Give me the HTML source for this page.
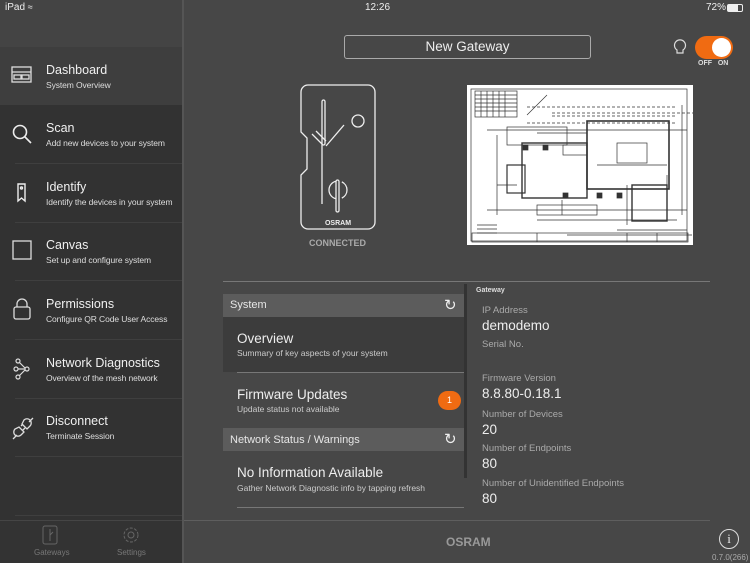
<!DOCTYPE html>
<html><head><meta charset="utf-8"><style>
*{margin:0;padding:0;box-sizing:border-box}
body{width:750px;height:563px;overflow:hidden;background:#474747;font-family:"Liberation Sans",sans-serif;color:#eee;position:relative}
.abs{position:absolute;white-space:nowrap}
#side{left:0;top:0;width:182px;height:563px;background:#323232}
#sideTop{left:0;top:0;width:182px;height:47px;background:#444}
.row{position:absolute;left:0;width:182px;height:59px}
.row .t{position:absolute;left:46px;top:16px;font-size:12.5px;color:#f0f0f0;white-space:nowrap}
.row .s{position:absolute;left:46px;top:33px;font-size:8.5px;color:#ddd;white-space:nowrap;letter-spacing:-0.1px}
.row .sep{position:absolute;left:15px;right:0;bottom:0;height:1px;background:#3f3f3f}
.row svg{position:absolute;left:10px;top:17px}
.lbl{font-size:9.5px;color:#aaa}
.val{font-size:13.5px;color:#eee}
</style></head><body>
<div class="abs" id="side"></div>
<div class="abs" id="sideTop"></div>
<div class="abs" style="left:182px;top:0;width:2px;height:563px;background:#555"></div>
<div class="abs" style="left:5px;top:2px;font-size:10px;color:#eee">iPad <span style="font-size:9px">&#8776;</span></div>
<div class="abs" style="left:365px;top:2px;font-size:10px;color:#eee">12:26</div>
<div class="abs" style="left:706px;top:2px;font-size:10px;color:#eee">72%</div>
<div class="abs" style="left:727px;top:4px;width:16px;height:8px;border:1px solid #eee;border-radius:2px"><div style="width:10px;height:6px;background:#eee"></div></div>

<div class="row" style="top:47px;height:58px;background:#3e3e3e">
<svg width="24" height="24" viewBox="0 0 24 24" fill="none" stroke="#ddd" stroke-width="1.3"><rect x="2" y="3" width="19" height="15"/><line x1="2" y1="8" x2="21" y2="8"/><rect x="4" y="11" width="7" height="4"/><rect x="12" y="11" width="7" height="4"/></svg>
<div class="t">Dashboard</div><div class="s">System Overview</div></div>
<div class="row" style="top:105px"><svg width="24" height="24" viewBox="0 0 24 24" fill="none" stroke="#eee" stroke-width="1.6"><circle cx="10" cy="10" r="6.5"/><line x1="15" y1="15" x2="21" y2="21"/></svg><div class="t">Scan</div><div class="s">Add new devices to your system</div><div class="sep"></div></div>
<div class="row" style="top:164px"><svg width="24" height="24" viewBox="0 0 24 24" fill="none" stroke="#eee" stroke-width="1.4"><path d="M8 3h7v17l-3.5-3-3.5 3z"/><circle cx="11.5" cy="7" r="1"/></svg><div class="t">Identify</div><div class="s">Identify the devices in your system</div><div class="sep"></div></div>
<div class="row" style="top:222px"><svg width="24" height="24" viewBox="0 0 24 24" fill="none" stroke="#ddd" stroke-width="1.3"><rect x="3" y="2" width="18" height="18"/></svg><div class="t">Canvas</div><div class="s">Set up and configure system</div><div class="sep"></div></div>
<div class="row" style="top:281px"><svg width="24" height="24" viewBox="0 0 24 24" fill="none" stroke="#ddd" stroke-width="1.3"><path d="M7 9V6a5 5 0 0 1 10 0v3"/><rect x="4" y="9" width="16" height="12" rx="2"/></svg><div class="t">Permissions</div><div class="s">Configure QR Code User Access</div><div class="sep"></div></div>
<div class="row" style="top:340px"><svg width="24" height="24" viewBox="0 0 24 24" fill="none" stroke="#ddd" stroke-width="1.2"><circle cx="8" cy="4" r="2"/><circle cx="6" cy="12" r="2"/><circle cx="8" cy="20" r="2"/><circle cx="17" cy="12" r="2"/><path d="M9.5 5.5 15 11M8 12h7M9.5 18.5 15 13"/></svg><div class="t">Network Diagnostics</div><div class="s">Overview of the mesh network</div><div class="sep"></div></div>
<div class="row" style="top:398px"><svg width="26" height="26" viewBox="0 0 26 26" fill="none" stroke="#ddd" stroke-width="1.3"><path d="M3 24l4-4M9 12l5 5-3 3a4 4 0 0 1-6-6zM12 9l5 5 3-3a4 4 0 0 0-6-6zM19 7l4-4M15 13l-2 2M11 11l2-2"/></svg><div class="t">Disconnect</div><div class="s">Terminate Session</div><div class="sep"></div></div>
<div class="row" style="top:457px"><div class="sep"></div></div>
<div class="abs" style="left:0;top:520px;width:182px;height:43px;background:#333;border-top:1px solid #454545"></div>
<svg class="abs" style="left:42px;top:525px" width="16" height="20" viewBox="0 0 16 20" fill="none" stroke="#666" stroke-width="1"><rect x="1" y="1" width="14" height="18" rx="2"/><path d="M8 4v12M8 10l3-3"/></svg>
<svg class="abs" style="left:121px;top:525px" width="20" height="20" viewBox="0 0 20 20" fill="none" stroke="#666" stroke-width="1"><circle cx="10" cy="10" r="3"/><circle cx="10" cy="10" r="7" stroke-dasharray="3 1.5"/></svg>
<div class="abs" style="left:34px;top:548px;font-size:8px;color:#777">Gateways</div>
<div class="abs" style="left:117px;top:548px;font-size:8px;color:#777">Settings</div>

<div class="abs" style="left:344px;top:35px;width:247px;height:24px;border:1px solid #aaa;border-radius:3px;text-align:center;font-size:13.5px;line-height:22px;color:#eee">New Gateway</div>
<svg class="abs" style="left:673px;top:38px" width="14" height="18" viewBox="0 0 14 18" fill="none" stroke="#ddd" stroke-width="1.2"><path d="M4 12a5.5 5.5 0 1 1 6 0v3H4z"/></svg>
<div class="abs" style="left:695px;top:36px;width:38px;height:23px;border-radius:12px;background:#f06b12"><div style="position:absolute;right:2px;top:2px;width:19px;height:19px;border-radius:50%;background:#fff"></div></div>
<div class="abs" style="left:698px;top:60px;font-size:7px;font-weight:bold;color:#ddd">OFF&nbsp;&nbsp; ON</div>

<svg class="abs" style="left:298px;top:84px" width="80" height="150" viewBox="0 0 80 150" fill="none" stroke="#eee" stroke-width="1.3"><path d="M10 1h60a7 7 0 0 1 7 7v130a7 7 0 0 1-7 7H10a7 7 0 0 1-7-7V91l6-6V54l-6-6V8a7 7 0 0 1 7-7z"/><rect x="24" y="16" width="3" height="45" rx="1.5"/><path d="M14 50l10 10v60M18 47l10 10M28 62l18-21"/><circle cx="60" cy="37" r="6"/><path d="M31 106a7 7 0 1 0 18 0M31 106a7 7 0 0 1 18 0" stroke-dasharray="12 6"/><rect x="38" y="96" width="3" height="32" rx="1.5"/><text x="40" y="141" fill="#eee" stroke="none" font-size="7" font-weight="bold" text-anchor="middle" font-family="Liberation Sans">OSRAM</text></svg>
<div class="abs" style="left:309px;top:238px;font-size:9px;font-weight:bold;color:#aaa">CONNECTED</div>

<svg class="abs" style="left:467px;top:85px" width="226" height="160" viewBox="0 0 226 160"><rect width="226" height="160" fill="#fff"/><g stroke="#333" fill="none" stroke-width="0.7"><rect x="4" y="4" width="216" height="152"/><rect x="8" y="6" width="42" height="26"/><path d="M8 10h42M8 14h42M8 18h42M8 22h42M8 26h42M14 6v26M20 6v26M26 6v26M32 6v26M38 6v26"/><path d="M85 28h150M85 31h125M60 22h150M60 38h150" stroke-dasharray="3 2"/><path d="M120 36v70M152 55h0" /><rect x="120" y="36" width="82" height="68" stroke-width="1.6"/><rect x="55" y="58" width="65" height="55" stroke-width="1.4"/><rect x="40" y="80" width="18" height="28" stroke-width="1.2"/><rect x="96" y="60" width="24" height="10"/><rect x="150" y="58" width="30" height="20"/><path d="M30 50v80M215 20v110M20 45h200M20 125h200M60 30l20-20M70 48h50M30 100h20M130 80h70M160 100v40M200 90v40M95 115v15M70 135h140M10 140h20M10 144h20M10 148h20M150 145h70M240 120h0M100 150h125" /><rect x="165" y="100" width="35" height="36" stroke-width="1.4"/><rect x="40" y="42" width="60" height="18"/><rect x="70" y="120" width="60" height="10"/><path d="M56 60h5v5h-5zM76 60h5v5h-5zM96 108h5v5h-5zM130 108h5v5h-5zM150 108h5v5h-5z" fill="#333"/><rect x="5" y="148" width="216" height="9"/><path d="M70 148v9M160 148v9M190 148v9"/></g></svg>

<div class="abs" style="left:223px;top:281px;width:487px;height:1px;background:#777"></div>
<div class="abs" style="left:223px;top:294px;width:241px;height:23px;background:#5c5c5c"></div>
<div class="abs" style="left:230px;top:299px;font-size:11px;color:#e6e6e6">System</div>
<div class="abs" style="left:444px;top:296px;font-size:15px;color:#eee">&#8635;</div>
<div class="abs" style="left:223px;top:317px;width:241px;height:55px;background:#3c3c3c"></div>
<div class="abs" style="left:237px;top:331px;font-size:13.5px">Overview</div>
<div class="abs" style="left:237px;top:348px;font-size:8.5px;color:#ccc">Summary of key aspects of your system</div>
<div class="abs" style="left:237px;top:372px;width:227px;height:1px;background:#777"></div>
<div class="abs" style="left:237px;top:387px;font-size:13.5px">Firmware Updates</div>
<div class="abs" style="left:237px;top:404px;font-size:8.5px;color:#ccc">Update status not available</div>
<div class="abs" style="left:438px;top:391px;width:23px;height:19px;border-radius:10px;background:#f06b12;color:#fff;font-size:9px;text-align:center;line-height:19px">1</div>
<div class="abs" style="left:223px;top:428px;width:241px;height:23px;background:#5c5c5c"></div>
<div class="abs" style="left:230px;top:434px;font-size:11px;color:#e6e6e6">Network Status / Warnings</div>
<div class="abs" style="left:444px;top:430px;font-size:15px;color:#eee">&#8635;</div>
<div class="abs" style="left:237px;top:465px;font-size:13.5px">No Information Available</div>
<div class="abs" style="left:237px;top:483px;font-size:8.5px;color:#ccc">Gather Network Diagnostic info by tapping refresh</div>
<div class="abs" style="left:237px;top:507px;width:227px;height:1px;background:#777"></div>
<div class="abs" style="left:464px;top:284px;width:3px;height:194px;background:#333"></div>

<div class="abs" style="left:476px;top:287px;font-size:7px;font-weight:bold;color:#ddd">Gateway</div>
<div class="abs lbl" style="left:482px;top:305px">IP Address</div>
<div class="abs val" style="left:482px;top:318px">demodemo</div>
<div class="abs lbl" style="left:482px;top:339px">Serial No.</div>
<div class="abs lbl" style="left:482px;top:373px">Firmware Version</div>
<div class="abs val" style="left:482px;top:386px">8.8.80-0.18.1</div>
<div class="abs lbl" style="left:482px;top:409px">Number of Devices</div>
<div class="abs val" style="left:482px;top:422px">20</div>
<div class="abs lbl" style="left:482px;top:443px">Number of Endpoints</div>
<div class="abs val" style="left:482px;top:456px">80</div>
<div class="abs lbl" style="left:482px;top:478px">Number of Unidentified Endpoints</div>
<div class="abs val" style="left:482px;top:491px">80</div>

<div class="abs" style="left:184px;top:520px;width:526px;height:1px;background:#5e5e5e"></div>
<div class="abs" style="left:446px;top:535px;font-size:12px;font-weight:bold;color:#999">OSRAM</div>
<div class="abs" style="left:719px;top:529px;width:20px;height:20px;border:1.2px solid #ddd;border-radius:50%;text-align:center;font-family:'Liberation Serif',serif;font-size:13px;line-height:18px;color:#eee">i</div>
<div class="abs" style="left:712px;top:553px;font-size:8px;color:#aaa">0.7.0(266)</div>
</body></html>
